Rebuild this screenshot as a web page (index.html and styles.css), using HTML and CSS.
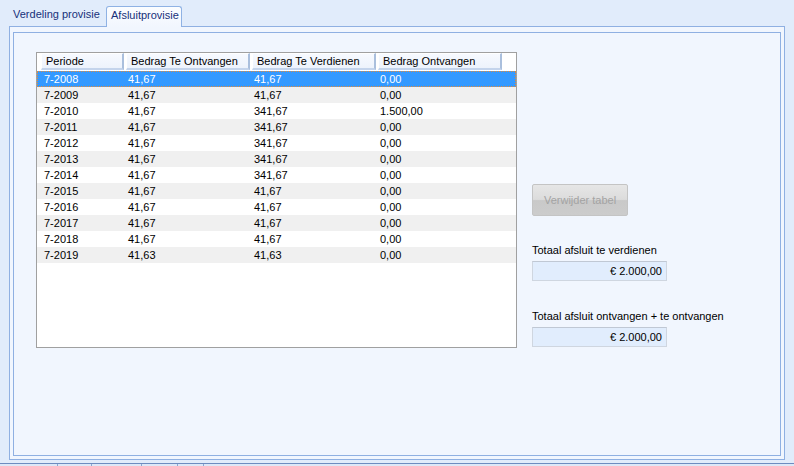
FILE: index.html
```html
<!DOCTYPE html>
<html>
<head>
<meta charset="utf-8">
<link rel="stylesheet" href="styles.css">
</head>
<body>
<div class="tabs">
  <div class="tab">Verdeling provisie</div>
  <div class="tab active">Afsluitprovisie</div>
</div>
<div class="panel">
  <div class="frame">
    <div class="grid">
      <div class="ghead">
        <div class="hc c1">Periode</div>
        <div class="hc c2">Bedrag Te Ontvangen</div>
        <div class="hc c3">Bedrag Te Verdienen</div>
        <div class="hc c4">Bedrag Ontvangen</div>
      </div>
      <div class="row sel"><div class="c1">7-2008</div><div class="c2">41,67</div><div class="c3">41,67</div><div class="c4">0,00</div></div>
      <div class="row alt"><div class="c1">7-2009</div><div class="c2">41,67</div><div class="c3">41,67</div><div class="c4">0,00</div></div>
      <div class="row"><div class="c1">7-2010</div><div class="c2">41,67</div><div class="c3">341,67</div><div class="c4">1.500,00</div></div>
      <div class="row alt"><div class="c1">7-2011</div><div class="c2">41,67</div><div class="c3">341,67</div><div class="c4">0,00</div></div>
      <div class="row"><div class="c1">7-2012</div><div class="c2">41,67</div><div class="c3">341,67</div><div class="c4">0,00</div></div>
      <div class="row alt"><div class="c1">7-2013</div><div class="c2">41,67</div><div class="c3">341,67</div><div class="c4">0,00</div></div>
      <div class="row"><div class="c1">7-2014</div><div class="c2">41,67</div><div class="c3">341,67</div><div class="c4">0,00</div></div>
      <div class="row alt"><div class="c1">7-2015</div><div class="c2">41,67</div><div class="c3">41,67</div><div class="c4">0,00</div></div>
      <div class="row"><div class="c1">7-2016</div><div class="c2">41,67</div><div class="c3">41,67</div><div class="c4">0,00</div></div>
      <div class="row alt"><div class="c1">7-2017</div><div class="c2">41,67</div><div class="c3">41,67</div><div class="c4">0,00</div></div>
      <div class="row"><div class="c1">7-2018</div><div class="c2">41,67</div><div class="c3">41,67</div><div class="c4">0,00</div></div>
      <div class="row alt"><div class="c1">7-2019</div><div class="c2">41,63</div><div class="c3">41,63</div><div class="c4">0,00</div></div>
    </div>
    <div class="side">
      <div class="btn">Verwijder tabel</div>
      <div class="lbl first">Totaal afsluit te verdienen</div>
      <div class="box">€ 2.000,00</div>
      <div class="lbl">Totaal afsluit ontvangen + te ontvangen</div>
      <div class="box">€ 2.000,00</div>
    </div>
  </div>
</div>
<div class="status">
  <div class="seg s1"></div>
  <div class="seg s2"></div>
  <div class="seg s3"></div>
  <div class="seg s4"></div>
  <div class="seg s5"></div>
  <div class="seg s6"></div>
</div>
</body>
</html>
```

FILE: styles.css
```css
html, body {
  margin: 0;
  padding: 0;
}
body {
  width: 794px;
  height: 466px;
  overflow: hidden;
  background: #e1ecfb;
  font-family: "Liberation Sans", Arial, sans-serif;
  font-size: 11px;
  color: #000;
}
.tabs {
  height: 26px;
  display: flex;
  align-items: flex-end;
  padding-left: 9px;
  box-sizing: border-box;
  position: relative;
  z-index: 2;
}
.tab {
  font-size: 11px;
  color: #17307a;
  height: 19px;
  line-height: 15px;
  padding: 0 0 0 4px;
  width: 97px;
  box-sizing: border-box;
  white-space: nowrap;
}
.tab.active {
  width: 76px;
  height: 21px;
  margin-bottom: -1px;
  line-height: 17px;
  padding: 0 0 0 4px;
  border: 1px solid #8fb2e4;
  border-bottom: none;
  border-radius: 3px 3px 0 0;
  background: linear-gradient(#fbfdff, #f1f6fe);
}
.panel {
  margin-left: 9px;
  width: 776px;
  height: 434px;
  box-sizing: border-box;
  border: 1px solid #8fb0e2;
  background: #f1f6fe;
  padding: 5px 3px 3px 3px;
}
.frame {
  height: 100%;
  box-sizing: border-box;
  border: 1px solid #8fb0e2;
  background: #f1f6fe;
  display: flex;
  align-items: flex-start;
  padding: 19px 0 0 22px;
}
.grid {
  width: 481px;
  height: 296px;
  box-sizing: border-box;
  border: 1px solid #a0a0a0;
  background: #fff;
  flex: none;
}
.ghead {
  height: 18px;
  display: flex;
  padding-left: 4px;
  background: #fff;
  box-sizing: border-box;
}
.hc {
  height: 17px;
  line-height: 15px;
  box-sizing: border-box;
  background: linear-gradient(#f7faff, #edf3fc);
  border-top: 1px solid #fff;
  border-left: 1px solid #fff;
  border-right: 2px solid #aabfdd;
  border-bottom: 2px solid #c4d4ec;
  padding-left: 4px;
  margin-right: 2px;
}
.ghead .c1 { width: 83px; }
.ghead .c2 { width: 124px; }
.ghead .c3 { width: 124px; }
.ghead .c4 { width: 124px; }
.row {
  height: 16px;
  line-height: 16px;
  display: flex;
  box-sizing: border-box;
}
.row.alt { background: #f0f0f0; }
.row.sel {
  background: #3399ff;
  color: #fff;
  outline: 1px dotted #e08a3a;
  outline-offset: -1px;
}
.row .c1 { width: 87px; padding-left: 7px; box-sizing: border-box; }
.row .c2 { width: 126px; padding-left: 4px; box-sizing: border-box; }
.row .c3 { width: 126px; padding-left: 4px; box-sizing: border-box; }
.row .c4 { width: 126px; padding-left: 4px; box-sizing: border-box; }
.side {
  margin-left: 15px;
  display: flex;
  flex-direction: column;
  align-items: flex-start;
}
.btn {
  margin-top: 132px;
  width: 96px;
  height: 32px;
  box-sizing: border-box;
  border: 1px solid #c4c4c4;
  border-radius: 2px;
  background: linear-gradient(#e6e6e6 0%, #dcdcdc 48%, #c9c9c9 52%, #cccccc 100%);
  color: #a3a3a3;
  text-align: center;
  line-height: 30px;
}
.lbl {
  margin-top: 28px;
  line-height: 14px;
  height: 14px;
}
.lbl.first { margin-top: 27px; }
.box {
  margin-top: 4px;
  width: 135px;
  height: 20px;
  box-sizing: border-box;
  border: 1px solid #cfd6e0;
  border-top-color: #c0c8d4;
  background: #e1edfd;
  text-align: right;
  padding-right: 4px;
  line-height: 18px;
}
.status {
  margin-top: 3px;
  border-top: 1px solid #6d8cc0;
  height: 4px;
  display: flex;
  background: #dde8f8;
}
.seg {
  height: 100%;
  border-right: 1px solid #8aa6d2;
  box-sizing: border-box;
}
.s1 { width: 58px; }
.s2 { width: 34px; }
.s3 { width: 50px; }
.s4 { width: 36px; }
.s5 { width: 26px; }
.s6 { flex: 1; border-right: none; }
```
